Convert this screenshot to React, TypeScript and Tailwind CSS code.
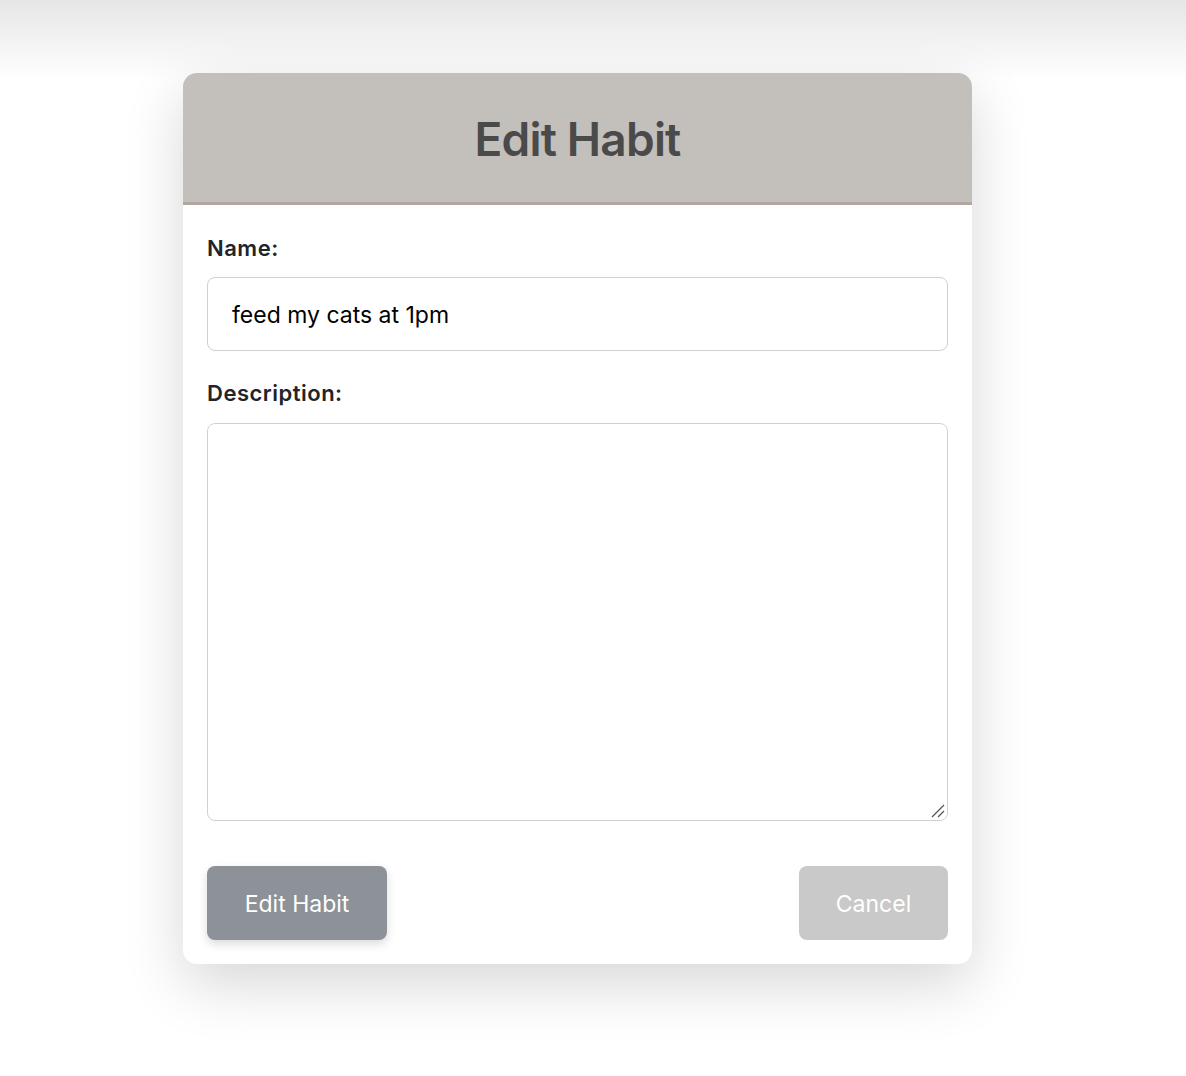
import React from "react";

export default function App() {
  return (
    <div
      className="relative w-[1186px] h-[1076px] bg-white overflow-hidden"
      style={{ fontFamily: "Inter, 'Noto Sans', sans-serif" }}
    >
      <div className="absolute left-0 top-0 w-full h-[80px] bg-gradient-to-b from-[#e6e6e6] to-white/0" />
      <div className="relative pt-[73px] flex justify-center">
        <div className="ml-[-31px] w-[789px] h-[891px] rounded-[14px] bg-white overflow-hidden shadow-[0_20px_60px_rgba(0,0,0,0.16)] flex flex-col">
          <div className="h-[132px] bg-[#c3bfbb] border-b-[3px] border-[#b3a69c] flex items-center justify-center">
            <h1 className="text-[46px] font-semibold text-[#4a4a4a] leading-none tracking-[-0.8px] pt-[2px]">
              Edit Habit
            </h1>
          </div>
          <div className="px-[24px] pt-[30px] flex flex-col">
            <label className="text-[22px] font-semibold text-[#212529] leading-[26px] tracking-[0.5px]">Name:</label>
            <div className="mt-[16px] h-[74px] border border-[#cfd1d4] rounded-[8px] flex items-center px-[24px]">
              <span className="text-[23px] text-black leading-none pt-[2px]">feed my cats at 1pm</span>
            </div>
            <label className="mt-[29px] text-[22px] font-semibold text-[#212529] leading-[26px] tracking-[0.5px]">Description:</label>
            <div className="relative mt-[17px] h-[398px] border border-[#cfd1d4] rounded-[8px]">
              <svg className="absolute right-[1px] bottom-[1px]" width="16" height="16" viewBox="0 0 16 16">
                <line x1="2" y1="14" x2="14" y2="2" stroke="#555" strokeWidth="1.2" />
                <line x1="8" y1="14" x2="14" y2="8" stroke="#555" strokeWidth="1.2" />
              </svg>
            </div>
            <div className="mt-[45px] flex justify-between">
              <button className="w-[180px] h-[74px] rounded-[8px] bg-[#8d9198] text-white text-[23px] pt-[2px] shadow-[0_4px_10px_rgba(0,0,0,0.15)]">
                Edit Habit
              </button>
              <button className="w-[149px] h-[74px] rounded-[8px] bg-[#c9c9c9] text-white text-[23px] pt-[2px]">
                Cancel
              </button>
            </div>
          </div>
        </div>
      </div>
    </div>
  );
}
